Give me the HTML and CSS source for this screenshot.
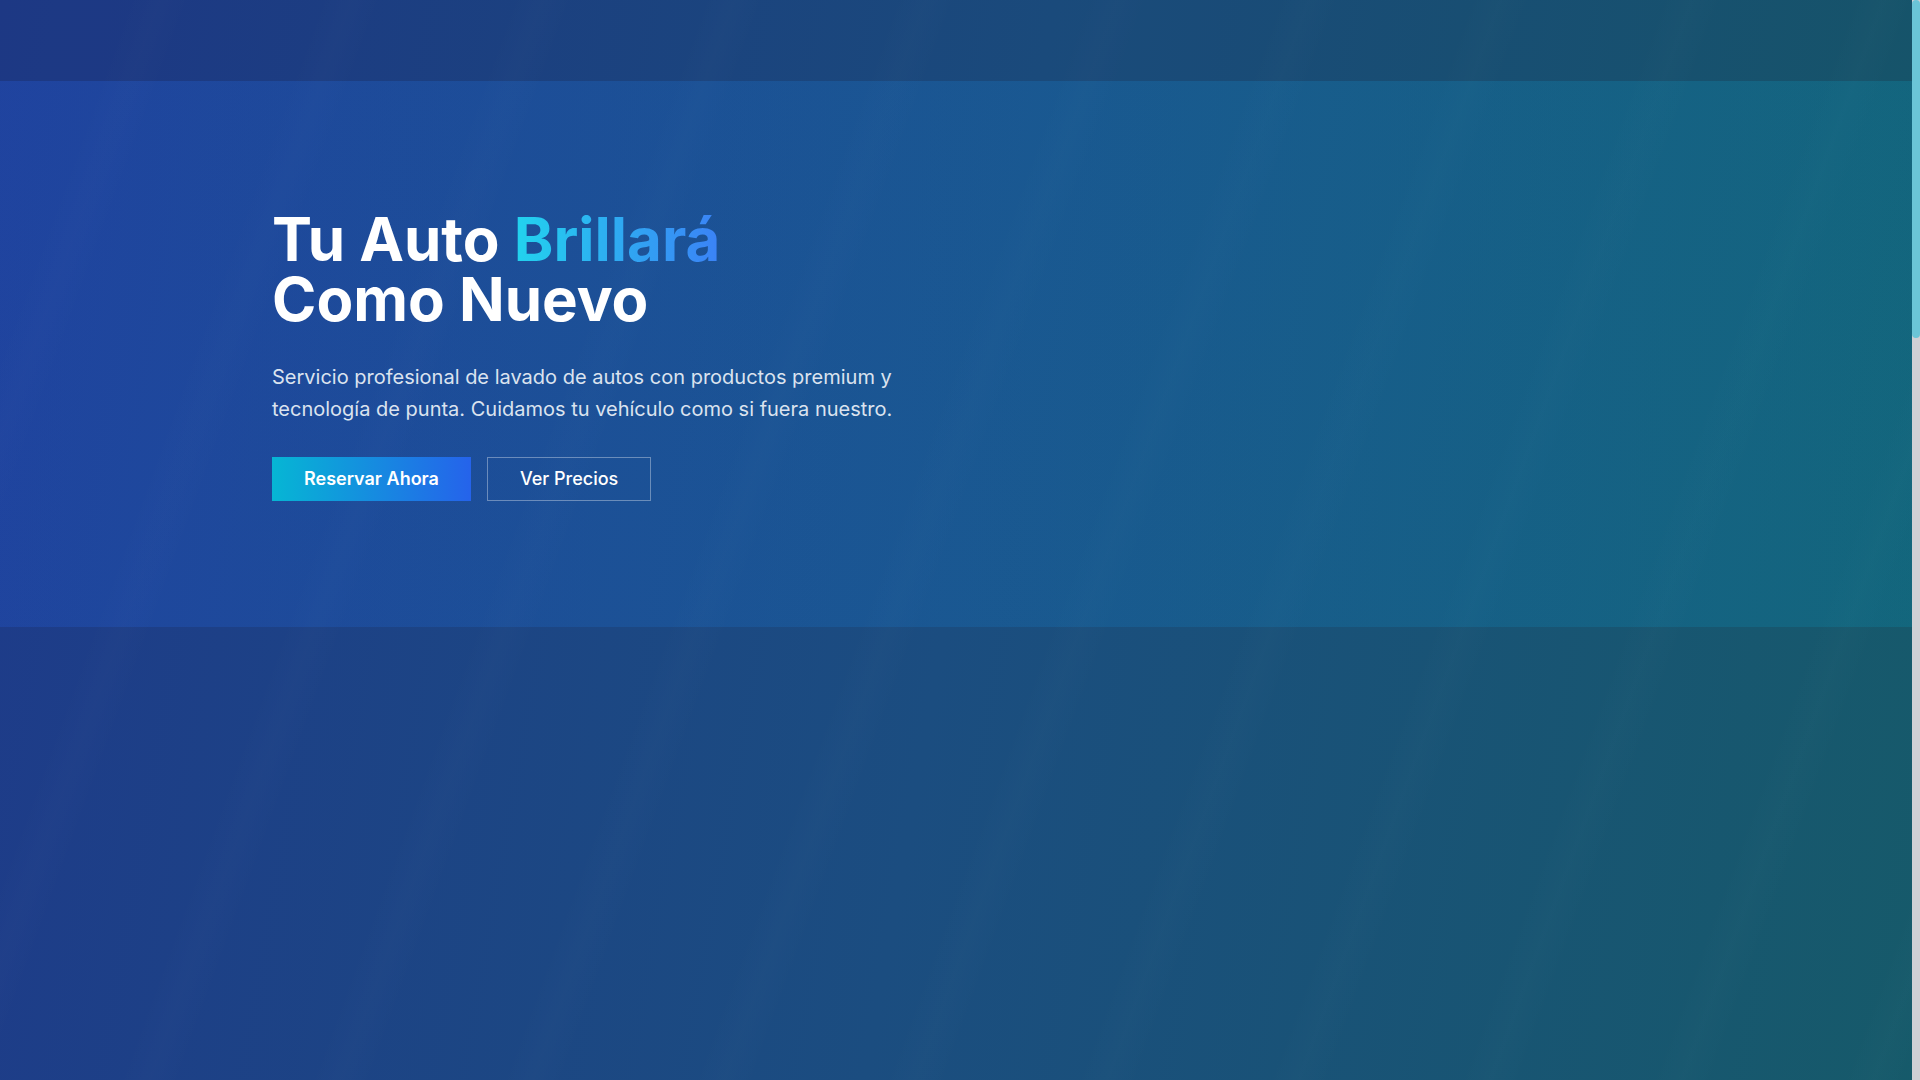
FILE: index.html
```html
<!DOCTYPE html>
<html lang="es">
<head>
    <meta charset="UTF-8">
    <meta name="viewport" content="width=device-width, initial-scale=1.0">
    <title>Lavado de Autos Premium</title>
    <link rel="stylesheet" href="styles.css">
</head>
<body>
    <header class="site-header"></header>
    <section class="hero">
        <div class="hero-content">
            <h1 class="hero-title">Tu Auto <span class="accent">Brillará</span><br>Como Nuevo</h1>
            <p class="hero-text">Servicio profesional de lavado de autos con productos premium y tecnología de punta. Cuidamos tu vehículo como si fuera nuestro.</p>
            <div class="hero-actions">
                <a href="#reservar" class="btn btn-primary">Reservar Ahora</a>
                <a href="#precios" class="btn btn-outline">Ver Precios</a>
            </div>
        </div>
    </section>
    <main class="sections"></main>
    <!-- barra de desplazamiento personalizada -->
    <div class="scroll-track" aria-hidden="true">
        <div class="scroll-thumb"></div>
    </div>
</body>
</html>
```

FILE: styles.css
```css
body {
    font-family: 'Inter', 'Noto Sans', sans-serif;
    margin: 0;
    padding: 0 8px 0 0;
    color: white;
    background-color: #1b4a7c;
    background-image:
        repeating-linear-gradient(110deg, rgba(255, 255, 255, 0) 0px, rgba(255, 255, 255, 0) 120px, rgba(255, 255, 255, 0.012) 150px, rgba(255, 255, 255, 0) 180px),
        linear-gradient(100deg, #1e3a8a 0%, #1b4d80 50%, #165a6a 100%);
    background-attachment: fixed;
}
.site-header {
    height: 81px;
    background-color: rgba(15, 23, 42, 0.05);
}
.hero {
    padding: 128px 0 126px;
    background-image: linear-gradient(90deg, rgba(37, 99, 235, 0.22), rgba(8, 145, 178, 0.24));
}
.hero-content {
    padding-left: 272px;
}
.hero-title {
    margin: 0 0 32px;
    font-size: 60px;
    line-height: 1;
    font-weight: 700;
}
.accent {
    background-image: linear-gradient(90deg, #22d3ee, #3b82f6);
    -webkit-background-clip: text;
    background-clip: text;
    color: transparent;
}
.hero-text {
    margin: 0 0 32px;
    max-width: 672px;
    font-size: 20px;
    line-height: 32px;
    color: #dbe3ef;
}
.hero-actions {
    display: flex;
    gap: 16px;
}
.btn {
    display: inline-block;
    padding: 8px 32px;
    font-size: 18px;
    line-height: 28px;
    font-weight: 600;
    color: white;
    text-decoration: none;
    box-sizing: border-box;
}
.btn-primary {
    background-image: linear-gradient(90deg, #06b6d4, #2563eb);
}
.btn-outline {
    border: 1px solid rgba(255, 255, 255, 0.35);
    padding: 7px 32px;
    font-weight: 500;
}
.sections {
    display: block;
    min-height: 2823px;
}
.scroll-track {
    position: fixed;
    top: 0;
    right: 0;
    width: 8px;
    height: 100vh;
    background-color: #cfd0d5;
}
.scroll-thumb {
    height: 338px;
    background-color: #6ac5d7;
    border-radius: 4px;
}
```
